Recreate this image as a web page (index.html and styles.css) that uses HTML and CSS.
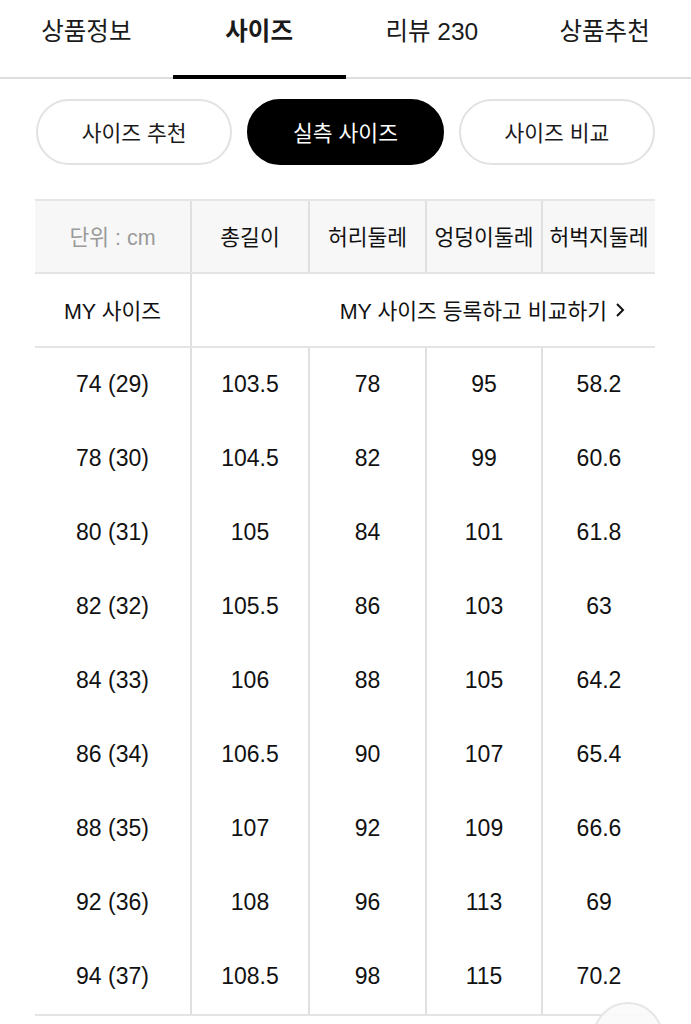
FILE: index.html
```html
<!DOCTYPE html>
<html lang="ko">
<head>
<meta charset="utf-8">
<link rel="stylesheet" href="styles.css">
</head>
<body>
<nav class="tabs">
  <div class="tab">상품정보</div>
  <div class="tab active">사이즈</div>
  <div class="tab">리뷰 230</div>
  <div class="tab">상품추천</div>
</nav>
<div class="pills">
  <div class="pill">사이즈 추천</div>
  <div class="pill on">실측 사이즈</div>
  <div class="pill">사이즈 비교</div>
</div>
<div class="table">
  <div class="row head">
    <div class="c c1 unit">단위 : cm</div>
    <div class="c">총길이</div>
    <div class="c">허리둘레</div>
    <div class="c">엉덩이둘레</div>
    <div class="c last">허벅지둘레</div>
  </div>
  <div class="row my">
    <div class="c c1">MY 사이즈</div>
    <div class="c span">MY 사이즈 등록하고 비교하기 <svg class="chev" width="10" height="16" viewBox="0 0 10 16"><path d="M2 2 L8 8 L2 14" fill="none" stroke="#111" stroke-width="2"/></svg></div>
  </div>
  <div class="body">
    <div class="row"><div class="c c1">74 (29)</div><div class="c">103.5</div><div class="c">78</div><div class="c">95</div><div class="c last">58.2</div></div>
    <div class="row"><div class="c c1">78 (30)</div><div class="c">104.5</div><div class="c">82</div><div class="c">99</div><div class="c last">60.6</div></div>
    <div class="row"><div class="c c1">80 (31)</div><div class="c">105</div><div class="c">84</div><div class="c">101</div><div class="c last">61.8</div></div>
    <div class="row"><div class="c c1">82 (32)</div><div class="c">105.5</div><div class="c">86</div><div class="c">103</div><div class="c last">63</div></div>
    <div class="row"><div class="c c1">84 (33)</div><div class="c">106</div><div class="c">88</div><div class="c">105</div><div class="c last">64.2</div></div>
    <div class="row"><div class="c c1">86 (34)</div><div class="c">106.5</div><div class="c">90</div><div class="c">107</div><div class="c last">65.4</div></div>
    <div class="row"><div class="c c1">88 (35)</div><div class="c">107</div><div class="c">92</div><div class="c">109</div><div class="c last">66.6</div></div>
    <div class="row"><div class="c c1">92 (36)</div><div class="c">108</div><div class="c">96</div><div class="c">113</div><div class="c last">69</div></div>
    <div class="row"><div class="c c1">94 (37)</div><div class="c">108.5</div><div class="c">98</div><div class="c">115</div><div class="c last">70.2</div></div>
  </div>
</div>
<div class="fade"></div>
<div class="topbtn"></div>
</body>
</html>
```

FILE: styles.css
```css
* { box-sizing: border-box; }
html, body { margin: 0; padding: 0; background: #fff; }
body {
  width: 691px;
  height: 1024px;
  overflow: hidden;
  position: relative;
  font-family: "Liberation Sans", "Noto Sans CJK KR", sans-serif;
  color: #111;
}
.tabs {
  display: grid;
  grid-template-columns: repeat(4, 1fr);
  height: 79px;
  border-bottom: 2px solid #dedede;
}
.tab {
  display: flex;
  align-items: center;
  justify-content: center;
  height: 77px;
  padding-bottom: 19px;
  font-size: 24.5px;
  color: #1a1a1a;
}
.tab.active {
  font-weight: 700;
  position: relative;
}
.tab.active::after {
  content: "";
  position: absolute;
  left: 0;
  right: 0;
  bottom: -2px;
  height: 4px;
  background: #000;
}
.pills {
  display: flex;
  gap: 15px;
  padding: 20px 36px 0 36px;
}
.pill {
  flex: 1;
  height: 66px;
  border: 2px solid #e2e2e2;
  border-radius: 33px;
  display: flex;
  align-items: center;
  justify-content: center;
  font-size: 21.5px;
  color: #1a1a1a;
  padding-bottom: 2px;
}
.pill.on {
  background: #000;
  border-color: #000;
  color: #fff;
}
.table {
  margin: 34px 36px 0 35px;
  border-top: 2px solid #e6e6e6;
}
.row {
  display: grid;
  grid-template-columns: 157px 118px 117px 116px 112px;
  height: 74px;
}
.row.head {
  background: #f7f7f7;
  height: 73px;
  border-bottom: 2px solid #e4e4e4;
}
.row.my {
  grid-template-columns: 157px 1fr;
  border-bottom: 2px solid #e4e4e4;
}
.c {
  display: flex;
  align-items: center;
  justify-content: center;
  font-size: 23px;
  border-right: 2px solid #e0e0e0;
  white-space: nowrap;
  padding-bottom: 2px;
}
.c.last { border-right: none; }
.head .c { font-size: 21.5px; }
.my .c { font-size: 21.5px; }
.unit { color: #9a9a9a; }
.span {
  border-right: none;
  justify-content: flex-end;
  padding-right: 30px;
  gap: 8px;
}
.chev { margin-top: 1px; }
.body {
  border-bottom: 2px solid #e4e4e4;
}
.fade {
  position: absolute;
  right: 0;
  top: 200px;
  width: 40px;
  height: 824px;
  background: linear-gradient(to right, rgba(255,255,255,0), #fff);
}
.topbtn {
  position: absolute;
  left: 593px;
  top: 1002px;
  width: 70px;
  height: 70px;
  border-radius: 50%;
  border: 2px solid #e6e6e6;
  background: rgba(250,250,250,0.9);
}
```
